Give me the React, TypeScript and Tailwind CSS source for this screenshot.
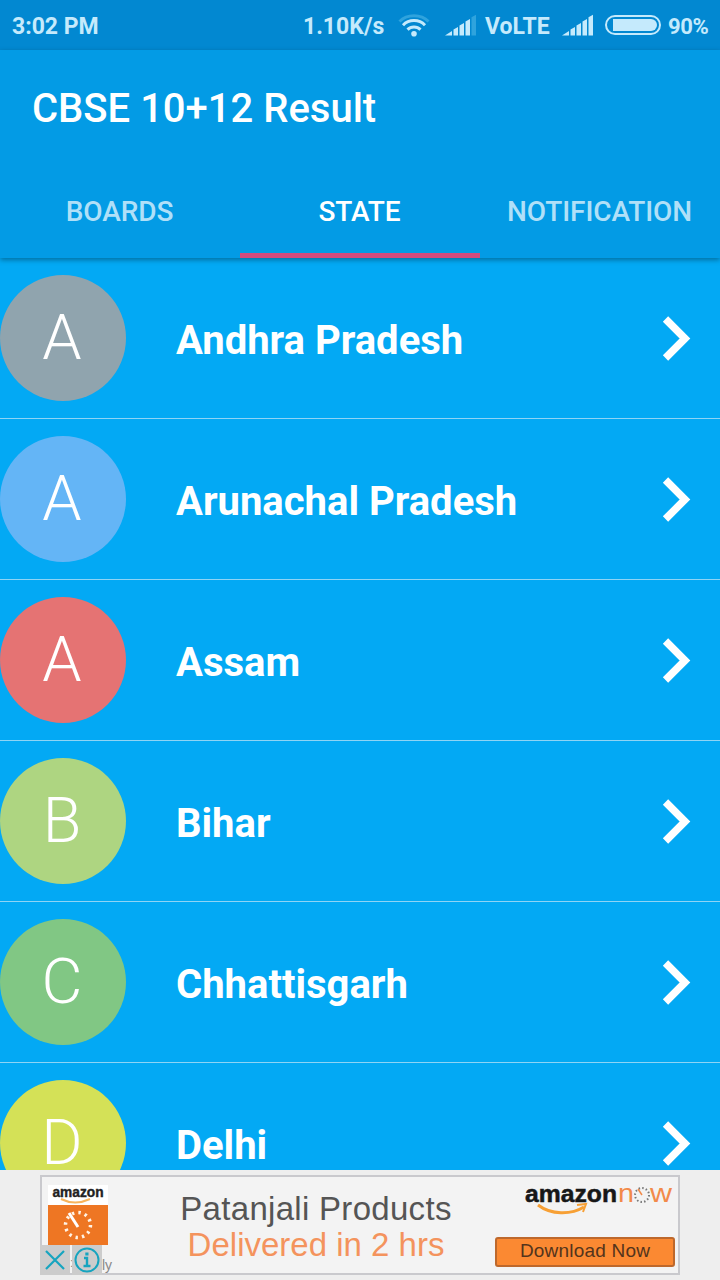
import clsx from "clsx";

const tabs = [
  { label: "BOARDS", active: false },
  { label: "STATE", active: true },
  { label: "NOTIFICATION", active: false },
];

const states = [
  { name: "Andhra Pradesh", color: "bg-[#90a4ae]" },
  { name: "Arunachal Pradesh", color: "bg-[#64b5f6]" },
  { name: "Assam", color: "bg-[#e57373]" },
  { name: "Bihar", color: "bg-[#aed581]" },
  { name: "Chhattisgarh", color: "bg-[#81c784]" },
  { name: "Delhi", color: "bg-[#d4e157]" },
];

function WifiIcon() {
  return (
    <svg className="mt-px h-6 w-8 shrink-0" viewBox="0 0 32 24" fill="none" strokeWidth="3">
      <path d="M1.5 7.5C9 -0.2 23 -0.2 30.5 7.5" stroke="#2fa3dd" />
      <path d="M5 11.2C11 5 21 5 27 11.2" stroke="#c5eafc" />
      <path d="M9.5 15.6C13 12 19 12 22.5 15.6" stroke="#c5eafc" />
      <circle cx="16" cy="19.8" r="2.8" fill="#c5eafc" />
    </svg>
  );
}

function SignalIcon({ weak = false }: { weak?: boolean }) {
  return (
    <svg className="h-[22px] w-8 shrink-0" viewBox="0 0 32 22" fill="#c5eafc">
      <path d="M0 21.5L7 17V21.5Z" />
      <path d="M8.5 15.5L13 13V21.5H8.5Z" />
      <path d="M14.5 11.5L19 9V21.5H14.5Z" />
      <path d="M20.5 7.5L25 5V21.5H20.5Z" />
      <path d="M26.5 3.3L31 0.7V21.5H26.5Z" fill={weak ? "#2fa3dd" : "#c5eafc"} />
    </svg>
  );
}

function StatusBar() {
  return (
    <div className="flex h-[50px] shrink-0 items-center bg-[#0288d1] pl-3 text-[23px] font-bold text-[#c5eafc]">
      <span className="w-[291px] pt-1">3:02 PM</span>
      <span className="w-[95px] pt-1">1.10K/s</span>
      <WifiIcon />
      <div className="ml-[15px] flex">
        <SignalIcon weak />
      </div>
      <span className="ml-2 w-[77px] pt-1">VoLTE</span>
      <SignalIcon />
      <div className="ml-[11px] h-5 w-14 shrink-0 rounded-full border-2 border-[#c5eafc] p-0.5 pl-[6px]">
        <div className="h-full rounded-l-[2px] rounded-r-full bg-[#c5eafc]" />
      </div>
      <span className="ml-[7px] pt-[3px] text-[22px] tracking-[-0.4px]">90%</span>
    </div>
  );
}

function Header() {
  return (
    <header className="relative z-10 flex h-[208px] shrink-0 flex-col bg-[#039be5] shadow-[0_2px_5px_rgba(0,0,0,0.35)]">
      <h1 className="flex h-[112px] items-center px-8 pt-[5px] text-[40px] font-medium text-white">
        CBSE 10+12 Result
      </h1>
      <nav className="grid h-24 grid-cols-3">
        {tabs.map(({ label, active }) => (
          <button
            key={label}
            className={clsx(
              "flex items-center justify-center whitespace-nowrap border-b-[5px] pt-[9px] pr-px text-[28px] font-medium tracking-[-0.1px]",
              active ? "border-[#d44a7e] text-white" : "border-transparent text-[#b0e0f8]"
            )}
          >
            {label}
          </button>
        ))}
      </nav>
    </header>
  );
}

function StateRow({ name, color }: { name: string; color: string }) {
  return (
    <li className="flex h-[161px] shrink-0 items-center border-b border-[#8fd4f5]">
      <div
        className={clsx(
          "flex size-[126px] items-center justify-center rounded-full pr-0.5 text-[63px] font-light text-white",
          color
        )}
      >
        {name[0]}
      </div>
      <span className="ml-[50px] flex-1 pt-1.5 text-[40px] font-bold text-white">{name}</span>
      <svg className="mr-7 h-[46px] w-[30px]" viewBox="0 0 30 46" fill="none" stroke="#fff" strokeWidth="7.5">
        <path d="M3.5 4L23 23.5L3.5 43" />
      </svg>
    </li>
  );
}

function AdBanner() {
  return (
    <div className="flex h-[110px] shrink-0 items-center justify-center bg-[#eeeeee] font-['Liberation_Sans',sans-serif]">
      <div className="relative flex h-[100px] w-[640px] border-2 border-[#c9c9cd] bg-[#f3f3f3]">
        <div className="ml-1.5 mt-2 flex h-[60px] w-[60px] flex-col bg-white">
          <svg viewBox="0 0 60 60" className="size-[60px]">
            <text x="30" y="12" textAnchor="middle" textLength="51" lengthAdjust="spacingAndGlyphs" fontSize="14" fontWeight="bold" fill="#222" stroke="#222" strokeWidth="0.4">
              amazon
            </text>
            <path d="M13 14Q27 21 42 14" fill="none" stroke="#f7b45c" strokeWidth="2" />
            <path d="M0 20H60V60H0Z" fill="#ee7623" />
            <circle cx="30" cy="40" r="12.5" fill="none" stroke="#fff3e5" strokeWidth="3.5" strokeDasharray="2.4 4.145" />
            <path d="M21 28L30 42" stroke="#fff" strokeWidth="3" />
          </svg>
        </div>
        <div className="ml-[66px] w-[284px] pt-3.5 text-center">
          <p className="whitespace-nowrap text-[33px] leading-9 tracking-[0.3px] text-[#555]">
            Patanjali Products
          </p>
          <p className="whitespace-nowrap text-[33px] leading-9 text-[#f4935d]">Delivered in 2 hrs</p>
        </div>
        <div className="ml-auto flex w-[184px] flex-col items-end pr-[3px]">
          <svg viewBox="0 0 150 50" className="h-[50px] w-[150px]">
            <text x="0" y="25" textLength="92" lengthAdjust="spacingAndGlyphs" fontSize="24" fontWeight="bold" fill="#171717" stroke="#171717" strokeWidth="0.5">
              amazon
            </text>
            <text x="93" y="25" textLength="16" lengthAdjust="spacingAndGlyphs" fontSize="26" fill="#f28a4a">
              n
            </text>
            <circle cx="117" cy="18" r="7" fill="none" stroke="#777" strokeWidth="2" strokeDasharray="1.5 2.165" />
            <path d="M113 12L117 18" stroke="#f28a4a" strokeWidth="1.5" />
            <text x="125" y="25" textLength="22" lengthAdjust="spacingAndGlyphs" fontSize="26" fill="#f28a4a">
              w
            </text>
            <path d="M13 28C26 38 46 38 59 30" fill="none" stroke="#f7a035" strokeWidth="3" />
            <path d="M52 28L61 27L58 35" fill="none" stroke="#f7a035" strokeWidth="2" />
          </svg>
          <button className="mt-2.5 flex h-[30px] w-[180px] items-center justify-center rounded-[3px] border-2 border-[#bd682c] bg-[#fb8932] pb-px text-[19px] tracking-[0.2px] text-[#54341c]">
            Download Now
          </button>
        </div>
        {/* ad choices overlay */}
        <div className="absolute -bottom-0.5 -left-0.5 flex items-end">
          <div className="flex h-[30px] w-[30px] items-center justify-center bg-[#cccccc]">
            <svg viewBox="0 0 20 20" className="size-5" stroke="#16a4bf" strokeWidth="2.2">
              <path d="M1 1L19 19M19 1L1 19" />
            </svg>
          </div>
          <span className="w-0.5 text-[13px] leading-6 text-[#888]">:</span>
          <div className="relative flex h-[30px] w-[30px] items-center justify-center bg-[#cccccc]">
            <svg viewBox="0 0 26 26" className="size-[26px]" fill="none" stroke="#16a4bf" strokeWidth="2">
              <circle cx="13" cy="13" r="11.5" />
              <path d="M10 11H13V19M9.5 19H16.5" strokeWidth="2.4" />
              <path d="M11.3 7H14.5" strokeWidth="3" />
            </svg>
          </div>
          <span className="text-[14px] leading-5 text-[#888]">ly</span>
        </div>
      </div>
    </div>
  );
}

export default function App() {
  return (
    <div className="flex h-[1280px] w-[720px] flex-col overflow-hidden bg-[#03a9f4] font-['Roboto',sans-serif]">
      <StatusBar />
      <Header />
      <ul className="flex min-h-0 flex-1 flex-col overflow-hidden">
        {states.map((state) => (
          <StateRow key={state.name} {...state} />
        ))}
      </ul>
      <AdBanner />
    </div>
  );
}
